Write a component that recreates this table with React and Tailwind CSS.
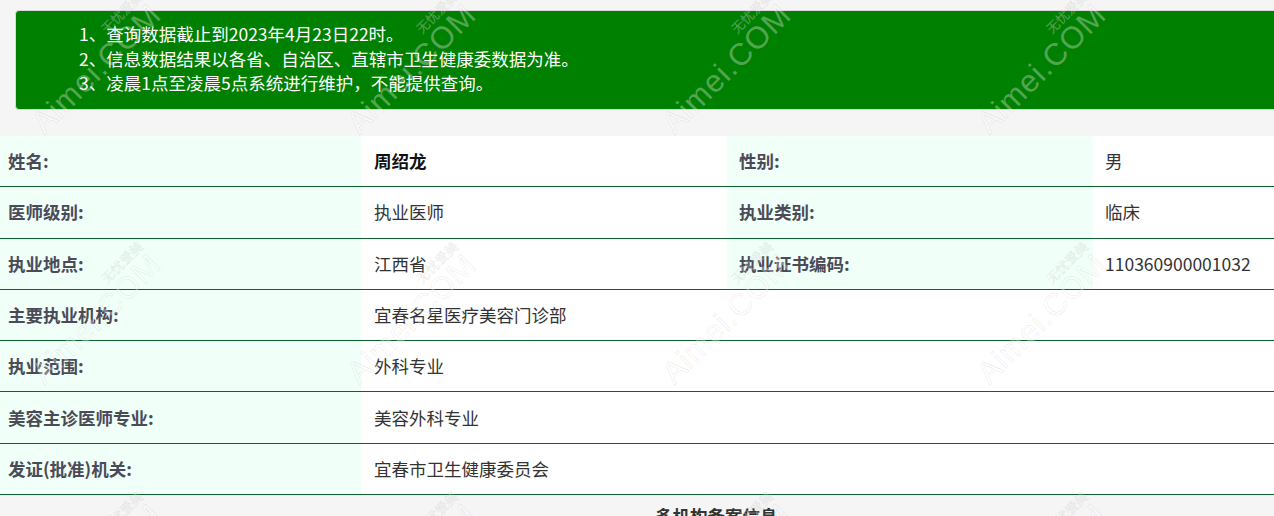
import React from "react";

const font = { fontFamily: '"Noto Sans CJK SC", "Noto Sans", sans-serif' };

function Watermark({ x, y }) {
  return (
    <div
      className="pointer-events-none absolute flex flex-col items-end leading-none -rotate-45 select-none"
      style={{ left: x - 82, top: y - 30 }}
    >
      <span className="text-[13px] text-[rgba(255,255,255,0.32)] [-webkit-text-stroke:0.4px_rgba(120,120,120,0.2)]">
        无忧爱美
      </span>
      <span
        className="text-[31px] tracking-[1px] text-[rgba(255,255,255,0.32)] [-webkit-text-stroke:0.5px_rgba(120,120,120,0.18)]"
        style={{ fontFamily: '"Liberation Sans", Arial, sans-serif' }}
      >
        Aimei.COM
      </span>
    </div>
  );
}

const rows2 = [
  ["姓名:", "周绍龙", "性别:", "男", true],
  ["医师级别:", "执业医师", "执业类别:", "临床"],
  ["执业地点:", "江西省", "执业证书编码:", "110360900001032"],
];
const rows1 = [
  ["主要执业机构:", "宜春名星医疗美容门诊部"],
  ["执业范围:", "外科专业"],
  ["美容主诊医师专业:", "美容外科专业"],
  ["发证(批准)机关:", "宜春市卫生健康委员会"],
];

export default function App() {
  const marks = [];
  [72, 322, 572].forEach((y) =>
    [90, 405, 720, 1035].forEach((x) => marks.push([x, y]))
  );
  return (
    <div
      className="relative w-[1274px] h-[516px] overflow-hidden bg-[#f5f5f5]"
      style={font}
    >
      <div className="pt-[10px] pl-[15px]">
        <div className="w-[1320px] h-[100px] rounded-[4px] border border-[#d9d9d9] bg-[#008000] pl-[63px] pt-[11px] text-[17.5px] leading-[24.5px] text-white">
          <div>1、查询数据截止到2023年4月23日22时。</div>
          <div>2、信息数据结果以各省、自治区、直辖市卫生健康委数据为准。</div>
          <div>3、凌晨1点至凌晨5点系统进行维护，不能提供查询。</div>
        </div>
      </div>

      <div className="mt-[26px] w-[1460px] text-[17.5px]">
        {rows2.map(([l1, v1, l2, v2, bold], i) => (
          <div
            key={i}
            className="grid h-[51.3px] grid-cols-[361px_366px_366px_1fr] border-b border-[#0b6430]"
          >
            <div className="flex items-center bg-[#f0fff8] pl-[8px] font-bold text-[#4b4b58]">
              {l1}
            </div>
            <div
              className={`flex items-center bg-white pl-[13px] ${
                bold ? "font-bold text-[#111]" : "text-[#333]"
              }`}
            >
              {v1}
            </div>
            <div className="flex items-center bg-[#f0fff8] pl-[12px] font-bold text-[#4b4b58]">
              {l2}
            </div>
            <div className="flex items-center bg-white pl-[12px] text-[#333]">
              {v2}
            </div>
          </div>
        ))}
        {rows1.map(([l, v], i) => (
          <div
            key={i}
            className="grid h-[51.3px] grid-cols-[361px_1fr] border-b border-[#0b6430]"
          >
            <div className="flex items-center bg-[#f0fff8] pl-[8px] font-bold text-[#4b4b58]">
              {l}
            </div>
            <div className="flex items-center bg-white pl-[13px] text-[#333]">
              {v}
            </div>
          </div>
        ))}
      </div>

      <div className="pl-[655px] pt-[9px] text-[17.5px] font-bold leading-[24px] text-[#333]">
        多机构备案信息
      </div>

      {marks.map(([x, y], i) => (
        <Watermark key={i} x={x} y={y} />
      ))}
    </div>
  );
}
